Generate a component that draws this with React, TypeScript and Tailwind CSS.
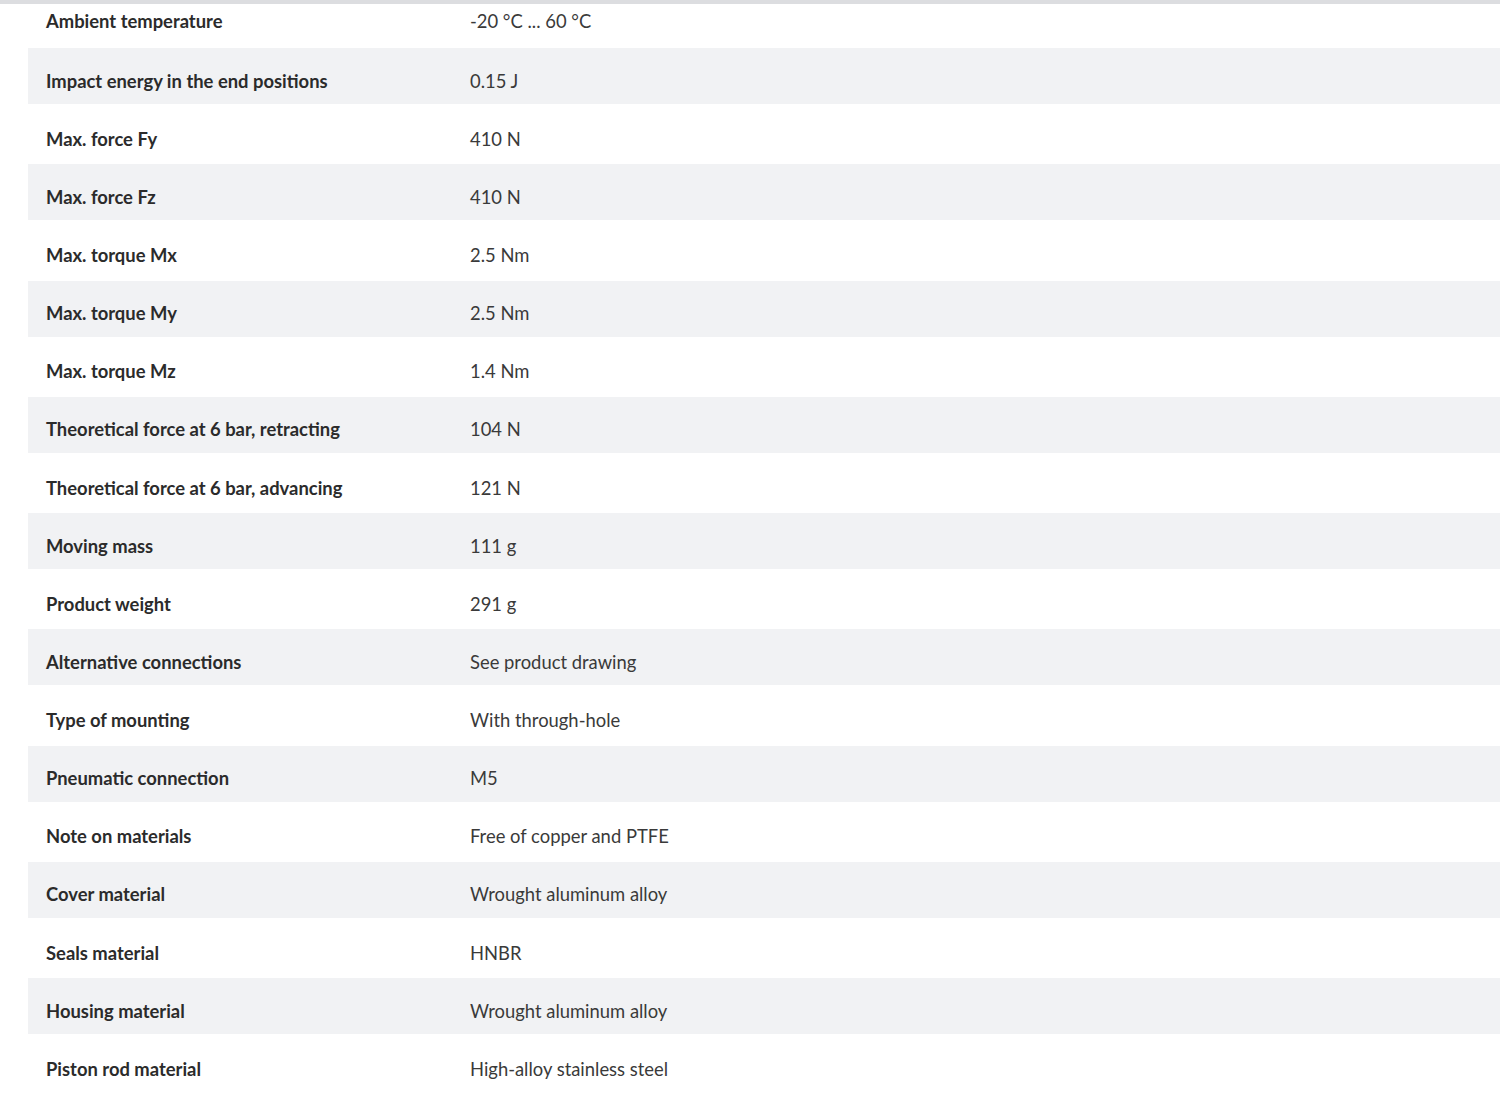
const rows: Array<[string, string]> = [
  ["Ambient temperature", "-20 °C ... 60 °C"],
  ["Impact energy in the end positions", "0.15 J"],
  ["Max. force Fy", "410 N"],
  ["Max. force Fz", "410 N"],
  ["Max. torque Mx", "2.5 Nm"],
  ["Max. torque My", "2.5 Nm"],
  ["Max. torque Mz", "1.4 Nm"],
  ["Theoretical force at 6 bar, retracting", "104 N"],
  ["Theoretical force at 6 bar, advancing", "121 N"],
  ["Moving mass", "111 g"],
  ["Product weight", "291 g"],
  ["Alternative connections", "See product drawing"],
  ["Type of mounting", "With through-hole"],
  ["Pneumatic connection", "M5"],
  ["Note on materials", "Free of copper and PTFE"],
  ["Cover material", "Wrought aluminum alloy"],
  ["Seals material", "HNBR"],
  ["Housing material", "Wrought aluminum alloy"],
  ["Piston rod material", "High-alloy stainless steel"],
];

export default function App() {
  return (
    <div className="w-[1500px] h-[1101px] overflow-hidden bg-white font-['Lato',sans-serif] text-[18.4px]">
      <div className="h-[4px] bg-[#dcdde0]" />
      <div className="pl-[28px]">
        {rows.map(([label, value], i) => {
          const first = i === 0;
          const gray = i % 2 === 1;
          return (
            <div
              key={label}
              className={
                first
                  ? "grid grid-cols-[424px_1fr] items-center h-[44px] pb-[8px]"
                  : gray
                  ? "grid grid-cols-[424px_1fr] items-center h-[56px] pt-[11px] bg-[#f1f2f4]"
                  : "grid grid-cols-[424px_1fr] items-center h-[60.25px] pt-[11px]"
              }
            >
              <div className="pl-[18px] font-bold text-[#2b2b2b]">{label}</div>
              <div className="pl-[18px] text-[#3a3a3a]">{value}</div>
            </div>
          );
        })}
      </div>
    </div>
  );
}
